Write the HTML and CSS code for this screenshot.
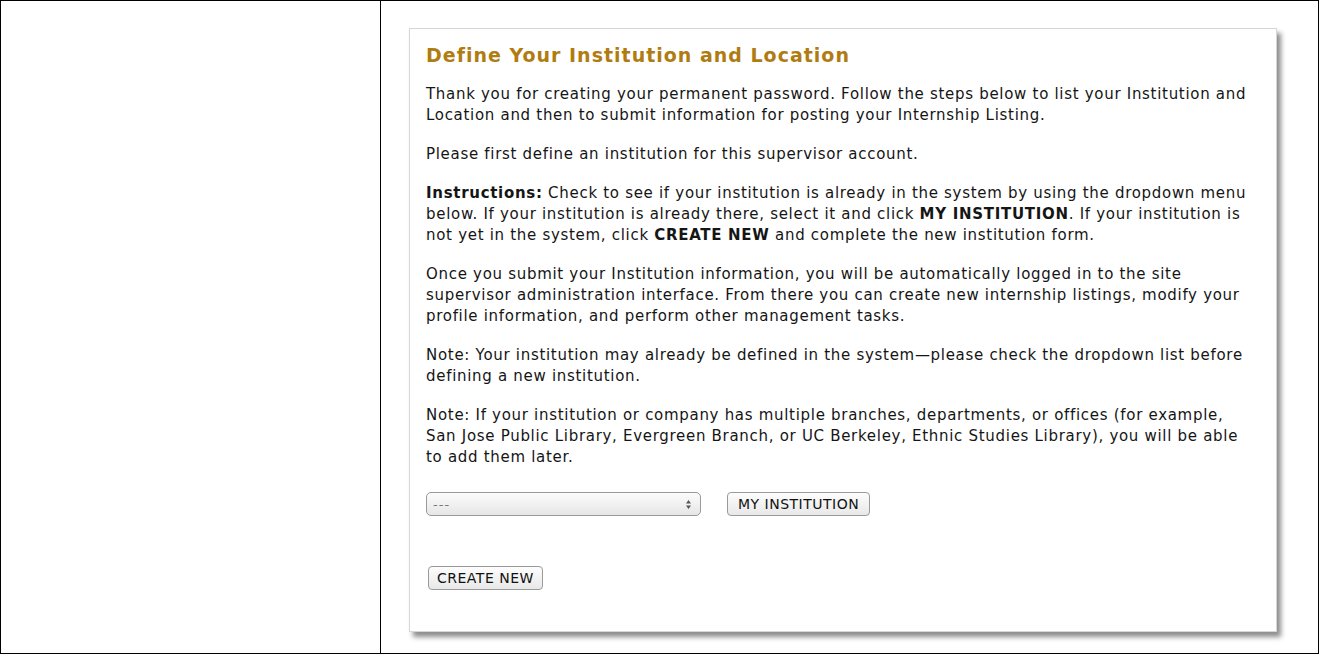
FILE: index.html
```html
<!DOCTYPE html>
<html lang="en">
<head>
    <meta charset="UTF-8">
    <title>Define Your Institution and Location</title>
    <link rel="stylesheet" href="styles.css">
</head>
<body>
<table class="layout">
    <tr>
        <td class="sidebar"></td>
        <td class="main">
            <div class="panel">
                <h2>Define Your Institution and Location</h2>
                <p>Thank you for creating your permanent password. Follow the steps below to list your Institution and Location and then to submit information for posting your Internship Listing.</p>
                <p>Please first define an institution for this supervisor account.</p>
                <p><b>Instructions:</b> Check to see if your institution is already in the system by using the dropdown menu below. If your institution is already there, select it and click <b>MY INSTITUTION</b>. If your institution is not yet in the system, click <b>CREATE NEW</b> and complete the new institution form.</p>
                <p>Once you submit your Institution information, you will be automatically logged in to the site supervisor administration interface. From there you can create new internship listings, modify your profile information, and perform other management tasks.</p>
                <p>Note: Your institution may already be defined in the system&mdash;please check the dropdown list before defining a new institution.</p>
                <p>Note: If your institution or company has multiple branches, departments, or offices (for example, San Jose Public Library, Evergreen Branch, or UC Berkeley, Ethnic Studies Library), you will be able to add them later.</p>
                <form class="pick">
                    <div class="select-box">
                        <span>---</span>
                        <svg width="7" height="11" viewBox="0 0 7 11"><path d="M3.5 1 L6 4.5 H1 Z M3.5 10 L6 6.5 H1 Z" fill="#555"/></svg>
                    </div>
                    <button type="button">MY INSTITUTION</button>
                </form>
                <div class="create">
                    <button type="button">CREATE NEW</button>
                </div>
            </div>
        </td>
    </tr>
</table>
</body>
</html>
```

FILE: styles.css
```css
html, body {
    margin: 0;
    padding: 0;
    background: white;
}
.layout {
    border-collapse: collapse;
    width: 1319px;
    height: 654px;
}
.layout td {
    border: 1px solid #000;
    vertical-align: top;
    padding: 0;
}
.sidebar {
    width: 379px;
}
.main {
    padding: 27px 0 0 28px !important;
}
.panel {
    width: 828px;
    height: 602px;
    border: 1px solid #d6d6d6;
    padding: 0 22px 0 16px;
    box-shadow: 4px 5px 5px rgba(0,0,0,0.45);
    font-family: Verdana, 'DejaVu Sans', sans-serif;
    font-size: 15px;
    letter-spacing: 0.7px;
    line-height: 21px;
    color: #151515;
}
.panel h2 {
    color: #b07c12;
    font-size: 19px;
    letter-spacing: 1px;
    margin: 13px 0 16px;
    line-height: 26px;
}
.panel p {
    margin: 0 0 18px;
}
.pick {
    display: flex;
    align-items: center;
    gap: 26px;
    margin-top: 24px;
}
.select-box {
    width: 259px;
    height: 22px;
    border: 1px solid #9a9a9a;
    border-radius: 5px;
    background: linear-gradient(#fcfcfc, #e6e6e6);
    display: flex;
    align-items: center;
    justify-content: space-between;
    padding: 0 8px 0 6px;
    font-family: 'DejaVu Sans', sans-serif;
    font-size: 13px;
    letter-spacing: 1px;
    color: #777;
}
button {
    font-family: 'DejaVu Sans', sans-serif;
    font-size: 14px;
    letter-spacing: 0.5px;
    color: #111;
    height: 24px;
    padding: 0 10px;
    border: 1px solid #9a9a9a;
    border-radius: 4px;
    background: linear-gradient(#fdfdfd, #e8e8e8);
}
.create {
    margin-top: 50px;
    padding-left: 2px;
}
.create button {
    padding: 0 8px;
}
```
